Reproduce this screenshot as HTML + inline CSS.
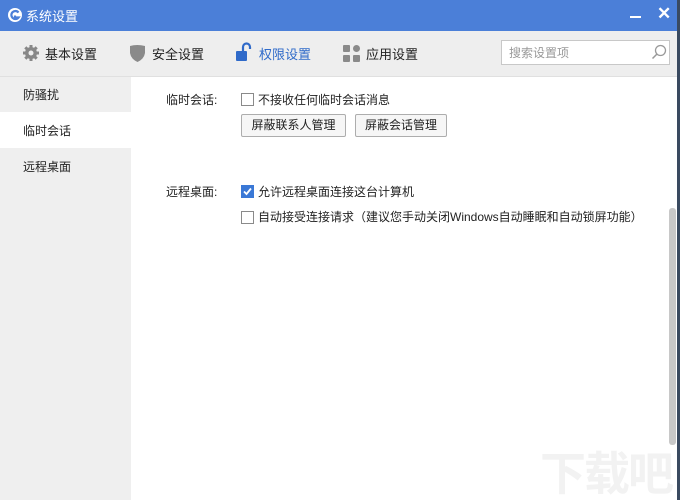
<!DOCTYPE html>
<html><head><meta charset="utf-8"><style>
*{margin:0;padding:0;box-sizing:border-box}
body{width:680px;height:500px;overflow:hidden;background:#fff;font-family:"Liberation Sans","Noto Sans CJK SC",sans-serif;font-size:12px;color:#222;position:relative}
.title{position:absolute;left:0;top:0;width:680px;height:31px;background:#4b7fd8;color:#fff;font-size:13px}
.tb{position:absolute;left:0;top:31px;width:680px;height:46px;background:#eeeeee;border-bottom:1px solid #e0e0e0}
.tab{position:absolute;top:13px;font-size:13px;color:#222}
.side{position:absolute;left:0;top:77px;width:131px;height:423px;background:#efefef}
.si{position:absolute;left:23px;font-size:12px}
.abs{position:absolute}
.cb{position:absolute;width:13px;height:13px;border:1px solid #8a8a8a;background:#fff}
.btn{position:absolute;height:23px;border:1px solid #adadad;border-radius:2px;background:#f6f6f6;font-size:12px;text-align:center;line-height:21px}
</style></head><body>
<div class="title">
<svg class="abs" style="left:7px;top:7px" width="16" height="16" viewBox="0 0 16 16"><circle cx="8" cy="8" r="7" fill="#fff"/><path d="M11.5 5.5A4 4 0 1 0 11.5 10.5H8V8.5" stroke="#4b7fd8" stroke-width="2.2" fill="none"/></svg>
<span class="abs" style="left:26px;top:6px">系统设置</span>
<div class="abs" style="left:630px;top:16px;width:11px;height:2px;background:#fff"></div>
<span class="abs" style="left:657px;top:4px;font-size:17px;font-weight:bold">✕</span>
</div>
<div class="tb">
<svg class="abs" style="left:22px;top:13px" width="18" height="18" viewBox="0 0 18 18"><circle cx="9" cy="9" r="6" fill="#888"/><g stroke="#888" stroke-width="3"><path d="M9 1v16M1 9h16M3.3 3.3l11.4 11.4M14.7 3.3L3.3 14.7"/></g><circle cx="9" cy="9" r="2.5" fill="#eee"/></svg>
<span class="tab" style="left:45px">基本设置</span>
<svg class="abs" style="left:129px;top:13px" width="17" height="18" viewBox="0 0 17 18"><path d="M1 2Q8 0 16 2V9Q15 15 8.5 18Q2 15 1 9Z" fill="#8a8a8a"/></svg>
<span class="tab" style="left:152px">安全设置</span>
<svg class="abs" style="left:235px;top:11px" width="18" height="20" viewBox="0 0 18 20"><path d="M8 9V5a3.5 3.5 0 0 1 7 0v2" stroke="#2f6ac9" stroke-width="2.2" fill="none"/><rect x="1" y="9" width="11" height="10" rx="1" fill="#2f6ac9"/></svg>
<span class="tab" style="left:259px;color:#2f6ac9">权限设置</span>
<svg class="abs" style="left:343px;top:14px" width="18" height="18" viewBox="0 0 18 18"><g fill="#8a8a8a"><rect x="0" y="0" width="7" height="7" rx="1"/><circle cx="13.5" cy="3.5" r="3.5"/><rect x="0" y="10" width="7" height="7" rx="1"/><rect x="10" y="10" width="7" height="7" rx="1"/></g></svg>
<span class="tab" style="left:366px">应用设置</span>
<div class="abs" style="left:501px;top:9px;width:169px;height:25px;background:#fff;border:1px solid #c8c8c8"></div>
<span class="abs" style="left:509px;top:13px;color:#999;font-size:12px">搜索设置项</span>
<svg class="abs" style="left:651px;top:13px" width="16" height="16" viewBox="0 0 16 16"><circle cx="9.5" cy="6.5" r="5" stroke="#999" stroke-width="1.3" fill="none"/><path d="M6 10L1.5 14.5" stroke="#999" stroke-width="1.5"/></svg>
</div>
<div class="side">
<span class="si" style="top:9px">防骚扰</span>
<div class="abs" style="left:0;top:35px;width:131px;height:36px;background:#fff"></div>
<span class="si" style="top:45px">临时会话</span>
<span class="si" style="top:81px">远程桌面</span>
</div>
<span class="abs" style="left:166px;top:91px">临时会话:</span>
<div class="cb" style="left:241px;top:93px"></div>
<span class="abs" style="left:258px;top:91px">不接收任何临时会话消息</span>
<div class="btn" style="left:241px;top:114px;width:105px">屏蔽联系人管理</div>
<div class="btn" style="left:355px;top:114px;width:92px">屏蔽会话管理</div>
<span class="abs" style="left:166px;top:183px">远程桌面:</span>
<div class="cb" style="left:241px;top:185px;background:#3a78d6;border-color:#3a78d6"><svg width="11" height="11" viewBox="0 0 11 11" style="position:absolute;left:0;top:0"><path d="M2 5.5L4.5 8 9 2.5" stroke="#fff" stroke-width="1.8" fill="none"/></svg></div>
<span class="abs" style="left:258px;top:183px">允许远程桌面连接这台计算机</span>
<div class="cb" style="left:241px;top:211px"></div>
<span class="abs" style="left:258px;top:208px">自动接受连接请求（建议您手动关闭Windows自动睡眠和自动锁屏功能）</span>
<div class="abs" style="left:669px;top:208px;width:7px;height:237px;background:#c8c8c8;border-radius:3px"></div>
<div class="abs" style="left:677px;top:0;width:3px;height:500px;background:#3a4a60"></div>
<span class="abs" style="left:540px;top:438px;font-size:46px;color:#f2f2f2;font-weight:bold;letter-spacing:-2px">下载吧</span>
</body></html>
